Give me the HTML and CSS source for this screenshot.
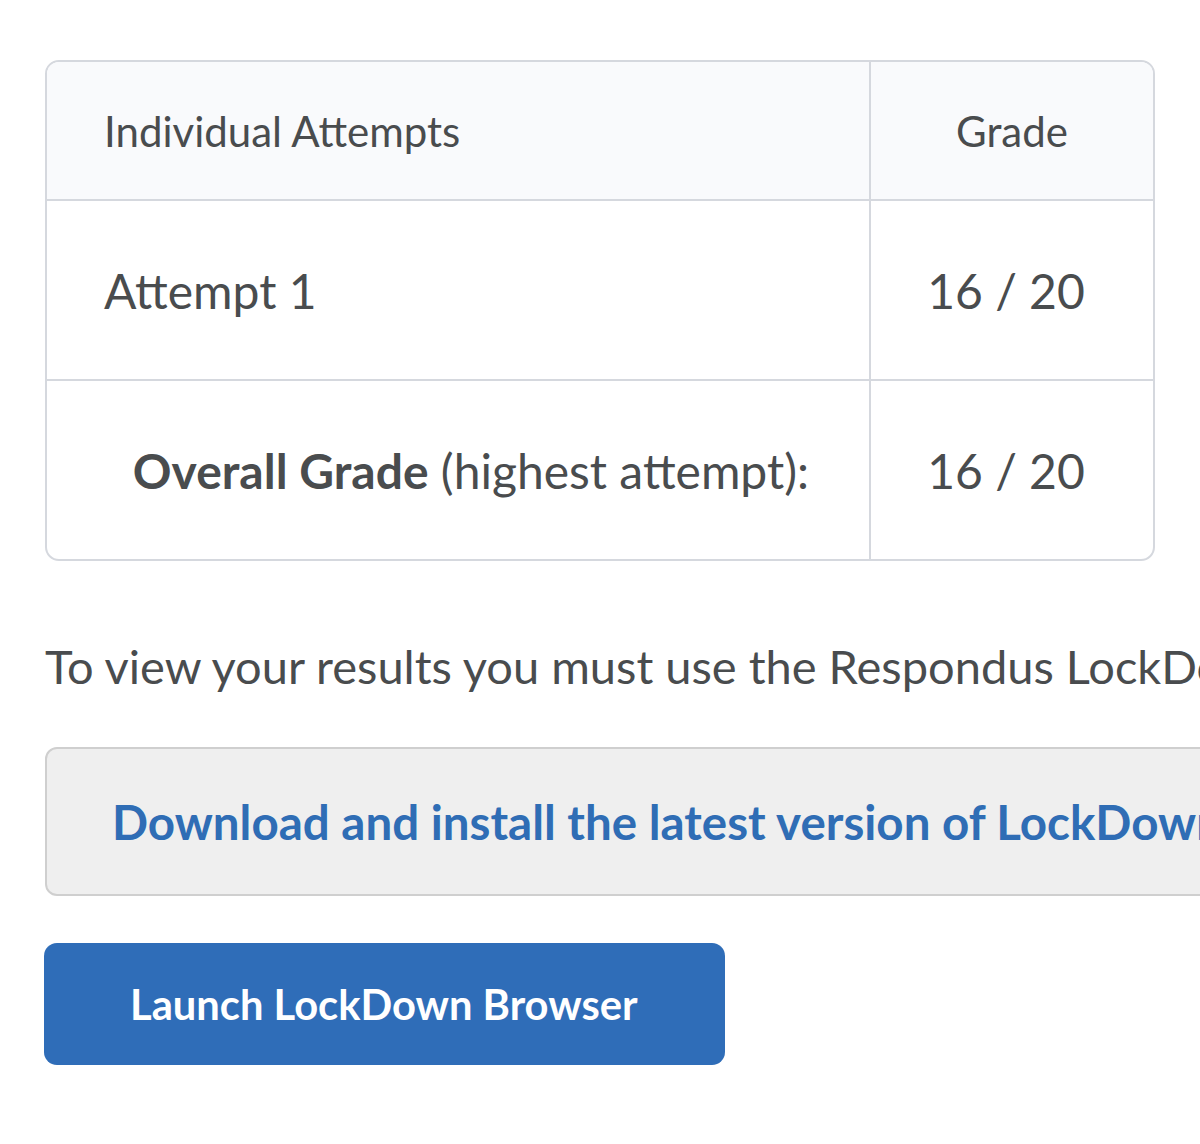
FILE: index.html
```html
<!DOCTYPE html>
<html>
<head>
<meta charset="utf-8">
<link rel="stylesheet" href="styles.css">
</head>
<body>
<main class="page">
  <div class="grades">
    <div class="cell head left">Individual Attempts</div>
    <div class="cell head center">Grade</div>
    <div class="cell row left big">Attempt 1</div>
    <div class="cell row center big score">16 / 20</div>
    <div class="cell row right overall"><strong>Overall Grade</strong>&nbsp;(highest attempt):</div>
    <div class="cell row center big score">16 / 20</div>
  </div>
  <p class="note">To view your results you must use the Respondus LockDown Browser.</p>
  <div class="download">
    <a class="download-link" href="#">Download and install the latest version of LockDown Browser</a>
  </div>
  <button class="launch" type="button">Launch LockDown Browser</button>
</main>
</body>
</html>
```
FILE: styles.css
```css
html, body {
  margin: 0;
  padding: 0;
  background: #ffffff;
  overflow: hidden;
}
body {
  font-family: Lato, "Noto Sans", sans-serif;
  color: #494c4e;
}
.page {
  padding: 60px 0 0 45px;
  width: 1600px;
}
.grades {
  width: 1110px;
  box-sizing: border-box;
  display: grid;
  grid-template-columns: 824px 1fr;
  border: 2px solid #d5d8de;
  border-radius: 14px;
  overflow: hidden;
}
.cell {
  display: flex;
  align-items: center;
  box-sizing: border-box;
  padding: 0 57px;
}
.head {
  height: 139px;
  background: #f9fafc;
  font-size: 42px;
  border-bottom: 2px solid #d5d8de;
}
.row {
  height: 180px;
  border-bottom: 2px solid #d5d8de;
}
.grades > .cell:nth-child(2n+1) {
  border-right: 2px solid #d5d8de;
}
.grades > .cell:nth-last-child(-n+2) {
  border-bottom: none;
  height: 178px;
}
.left { justify-content: flex-start; }
.center { justify-content: center; padding: 0; }
.score { padding-right: 12px; }
.right { justify-content: flex-end; padding-right: 60px; }
.big { font-size: 48px; }
.overall { font-size: 48px; }
.overall strong { font-weight: 700; }
.note {
  margin: 0;
  padding-top: 80px;
  font-size: 47px;
  line-height: 50px;
  white-space: nowrap;
}
.download {
  margin-top: 56px;
  height: 149px;
  width: 1300px;
  box-sizing: border-box;
  background: #efefef;
  border: 2px solid #cfcfcf;
  border-radius: 12px;
  display: flex;
  align-items: center;
  padding-left: 65px;
  white-space: nowrap;
}
.download-link {
  color: #2f6db5;
  font-weight: 700;
  font-size: 47.5px;
  text-decoration: none;
}
.launch {
  display: flex;
  align-items: center;
  margin: 47px 0 0 -1px;
  width: 681px;
  height: 122px;
  padding: 0 0 0 86px;
  border: none;
  border-radius: 13px;
  background: #2f6db8;
  color: #ffffff;
  font-family: Lato, "Noto Sans", sans-serif;
  font-weight: 700;
  font-size: 41.7px;
}
```
